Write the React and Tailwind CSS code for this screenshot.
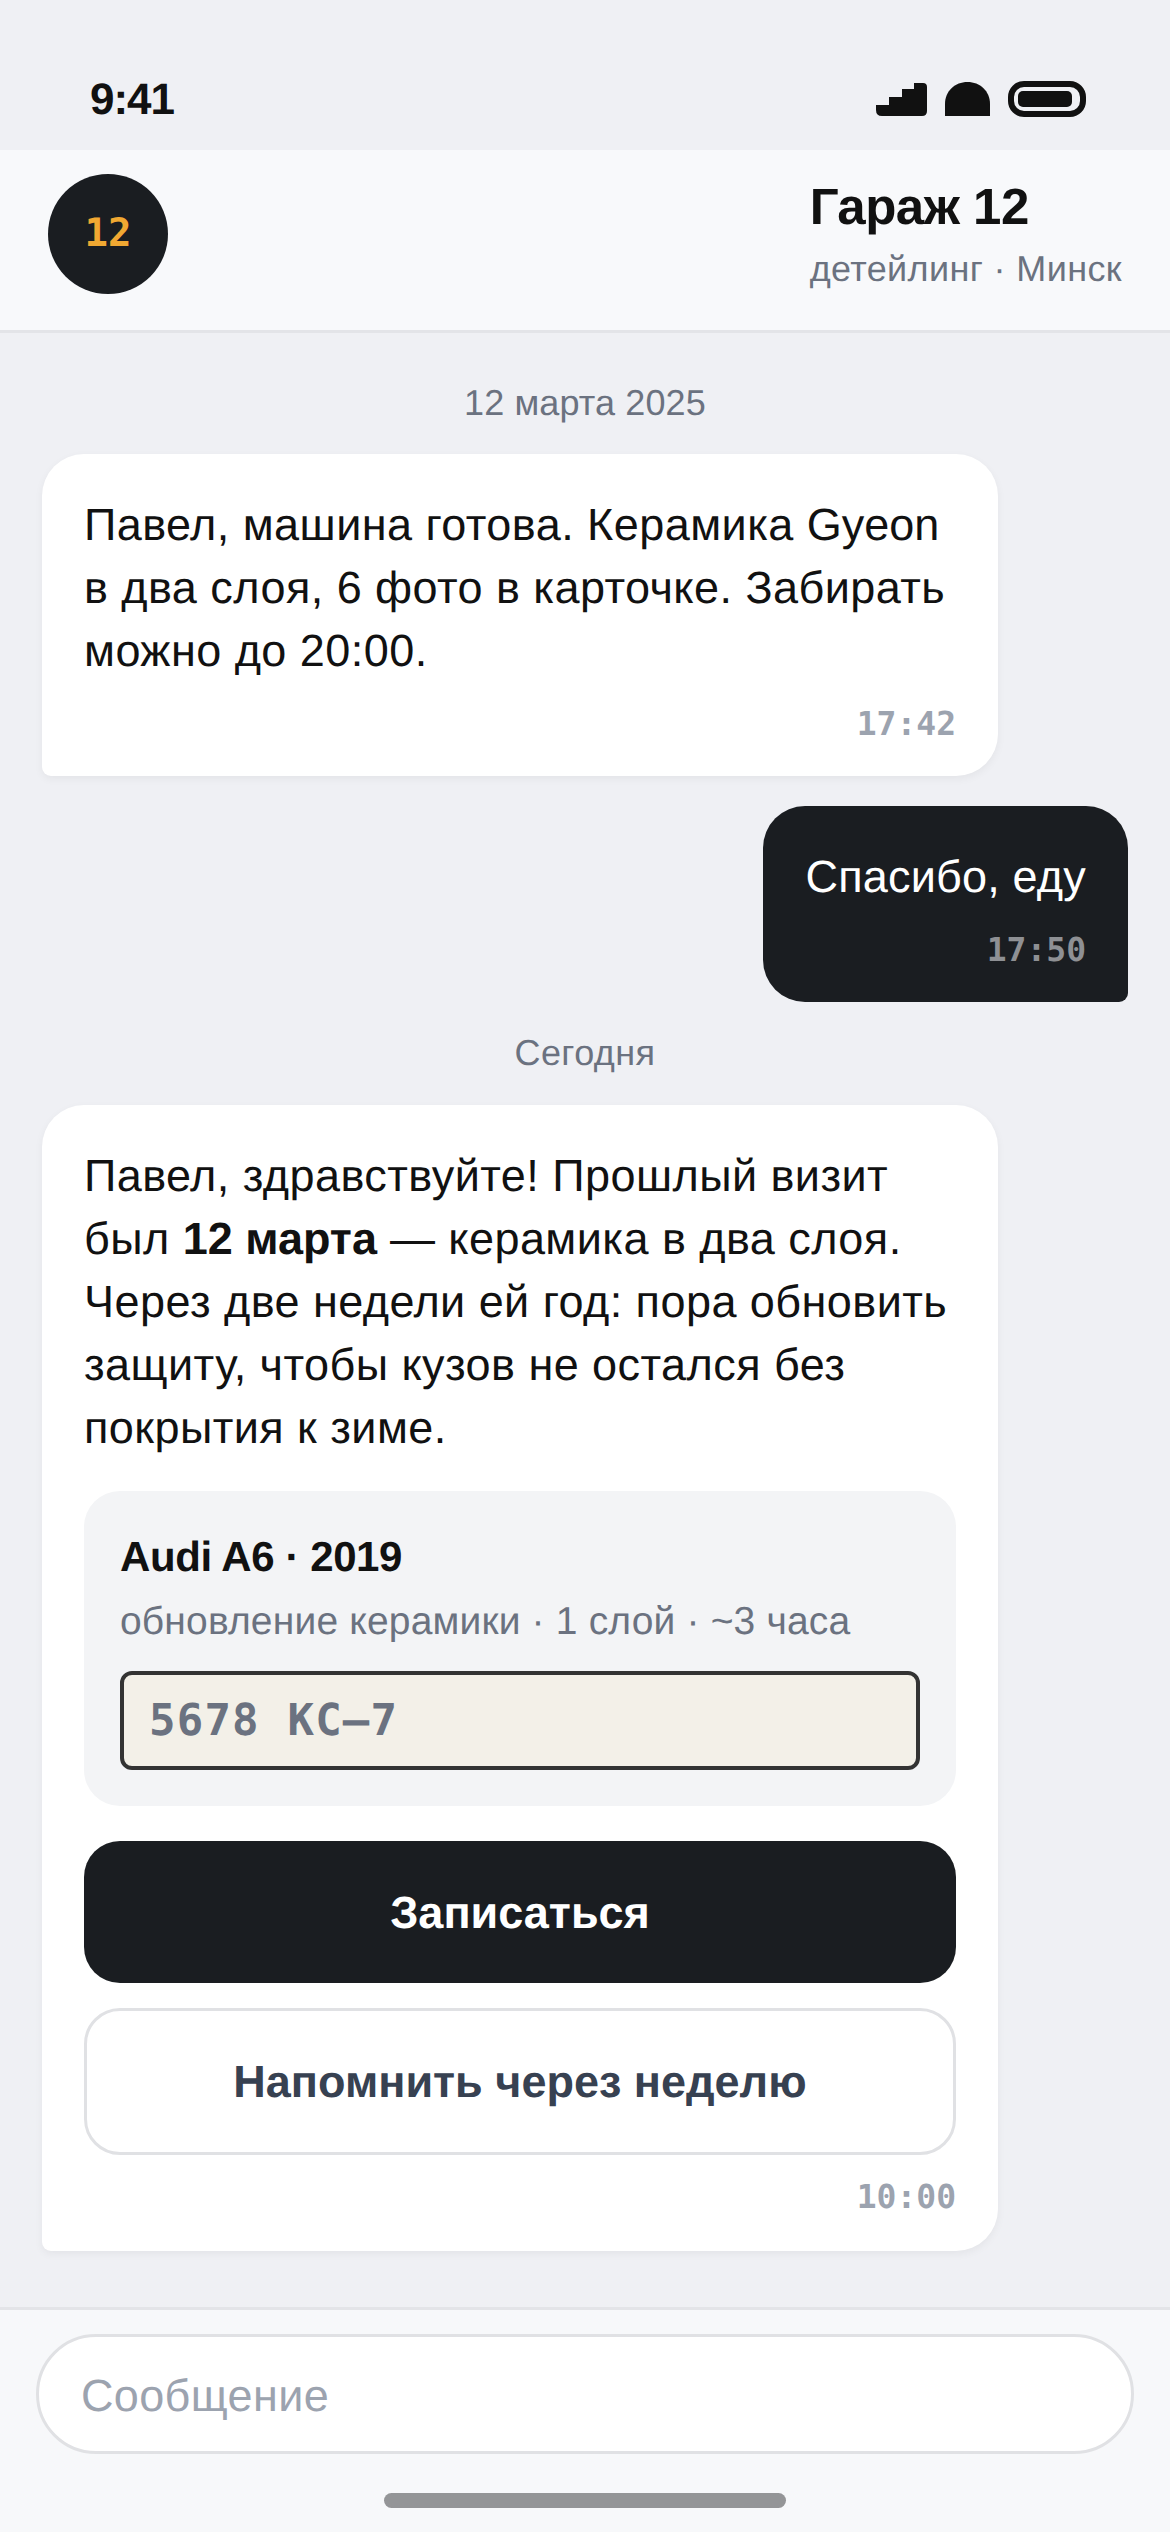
const sans = "font-['Liberation_Sans',Arial,sans-serif]";
const mono = "font-['DejaVu_Sans_Mono','Liberation_Mono',monospace]";

function StatusIcons() {
  return (
    <div className="flex items-center gap-[18px]">
      <svg width="51" height="33" viewBox="0 0 51 33" fill="#111">
        <path d="M0 27 V22 H13 V14 H26 V6 H38 V0 H47 Q51 0 51 4 V28 Q51 33 46 33 H6 Q0 33 0 27 Z" />
      </svg>
      <svg width="45" height="34" viewBox="0 0 45 34" fill="#111">
        <path d="M0 34 V22 C0 9 10 0 22.5 0 C35 0 45 9 45 22 V34 Z" />
      </svg>
      <svg width="78" height="36" viewBox="0 0 78 36">
        <rect x="3" y="3" width="72" height="30" rx="13" fill="none" stroke="#111" strokeWidth="6" />
        <rect x="10" y="10" width="54" height="16" rx="5" fill="#111" />
      </svg>
    </div>
  );
}

function Time({ children, dark }) {
  return (
    <div className={`${mono} mt-[18px] text-right text-[33px] leading-[48px] font-bold tracking-normal ${dark ? "text-[#8e9094]" : "text-[#9ca3af]"}`}>
      {children}
    </div>
  );
}

function DateLabel({ children, wide }) {
  return (
    <div className={`text-center text-[36px] leading-[54px] text-[#6b7280] ${wide ? "tracking-[0.45px]" : "tracking-[0.12px]"}`}>
      {children}
    </div>
  );
}

export default function App() {
  return (
    <div className={`${sans} flex h-[2532px] w-[1170px] flex-col overflow-hidden bg-[#eff0f4] text-[#111111] [text-rendering:geometricPrecision]`}>
      {/* Status bar */}
      <div className="flex h-[150px] shrink-0 items-start justify-between pt-[75px] pr-[84px] pl-[90px]">
        <span className="text-[44px] leading-[50px] font-bold tracking-[-1px]">9:41</span>
        <div className="pt-[6px]">
          <StatusIcons />
        </div>
      </div>

      {/* Header */}
      <div className="flex h-[183px] shrink-0 items-start justify-between border-b-[3px] border-[#e3e4e8] bg-[#f8f9fb] px-[48px] pt-[24px]">
        <div className={`${mono} flex h-[120px] w-[120px] items-center justify-center rounded-full bg-[#1a1d21] text-[39px] font-bold text-[#f0a832]`}>
          12
        </div>
        <div className="pt-[3px]">
          <div className="text-[51px] leading-[60px] font-bold tracking-[-0.01em]">Гараж 12</div>
          <div className="mt-[5px] text-[36px] leading-[54px] tracking-[0.38px] text-[#6b7280]">детейлинг · Минск</div>
        </div>
      </div>

      {/* Chat */}
      <div className="flex flex-1 flex-col px-[42px] pt-[43px]">
        <DateLabel>12 марта 2025</DateLabel>
        <div className="mt-[24px] w-[956px] rounded-[42px] rounded-bl-[9px] bg-white px-[42px] pt-[39px] pb-[28px] text-[45px] leading-[63px] tracking-[0.45px] shadow-[0_3px_9px_rgba(0,0,0,0.05)]">
          Павел, машина готова. Керамика <span className="tracking-normal">Gyeon</span> в два слоя, 6 фото в карточке. Забирать можно до 20:00.
          <Time>17:42</Time>
        </div>
        <div className="mt-[30px] self-end rounded-[42px] rounded-br-[9px] bg-[#1a1d21] px-[42px] pt-[39px] pb-[28px] text-[45px] leading-[63px] tracking-[0.2px] text-white">
          Спасибо, еду
          <Time dark>17:50</Time>
        </div>
        <div className="mt-[24px]">
          <DateLabel wide>Сегодня</DateLabel>
        </div>
        <div className="mt-[25px] w-[956px] rounded-[42px] rounded-bl-[9px] bg-white px-[42px] pt-[39px] pb-[30px] text-[45px] leading-[63px] tracking-[0.45px] shadow-[0_3px_9px_rgba(0,0,0,0.05)]">
          Павел, здравствуйте! Прошлый визит был <b className="tracking-normal">12 марта</b> — керамика в два слоя. Через две недели ей год: пора обновить защиту, чтобы кузов не остался без покрытия к зиме.
          <div className="mt-[32px] rounded-[36px] bg-[#f3f4f6] px-[36px] pt-[36px] pb-[36px] tracking-normal">
            <div className="text-[42px] leading-[60px] font-bold tracking-[-0.01em]">Audi A6 · 2019</div>
            <div className="mt-[8px] text-[39px] leading-[54px] tracking-[0.17px] text-[#6b7280]">обновление керамики · 1 слой · ~3 часа</div>
            <div className={`${mono} mt-[22px] flex h-[99px] items-center rounded-[12px] border-[4.5px] border-[#333333] bg-[#f3f0e8] px-[25px] text-[44px] font-bold tracking-[1.2px] text-[#6b7280]`}>
              5678 KC–7
            </div>
          </div>
          <div className="mt-[35px] flex h-[142px] items-center justify-center rounded-[36px] bg-[#1a1d21] text-[45px] font-bold tracking-normal text-white">
            Записаться
          </div>
          <div className="mt-[25px] flex h-[147px] items-center justify-center rounded-[36px] border-[3px] border-[#e0e1e4] text-[45px] font-bold tracking-normal text-[#374151]">
            Напомнить через неделю
          </div>
          <Time>10:00</Time>
        </div>
      </div>

      {/* Composer */}
      <div className="h-[225px] shrink-0 border-t-[3px] border-[#e3e4e8] bg-[#f7f8fa] px-[36px] pt-[24px]">
        <div className="flex h-[120px] items-center rounded-full border-[3px] border-[#e0e1e4] bg-white px-[42px] pt-[4px] text-[45px] tracking-[0.35px] text-[#9ca3af]">
          Сообщение
        </div>
        <div className="mx-auto mt-[39px] h-[15px] w-[402px] rounded-full bg-[#949597]" />
      </div>
    </div>
  );
}
